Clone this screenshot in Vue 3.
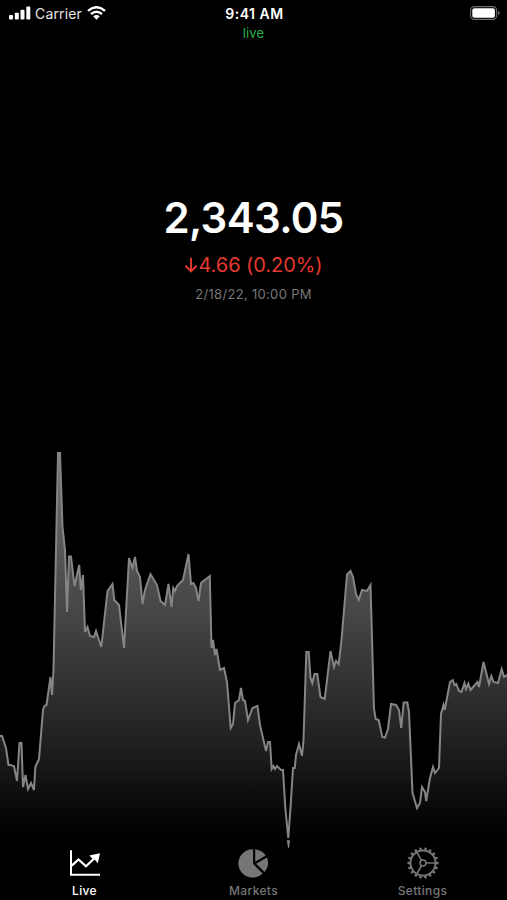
<template>
  <div class="screen">
    <header class="status">
      <div class="status__left">
        <svg class="status__signal" width="22" height="14" viewBox="0 0 22 14">
          <rect x="0" y="9" width="4" height="4.5" rx="1" />
          <rect x="5.8" y="6.7" width="4" height="6.8" rx="1" />
          <rect x="11.5" y="3.7" width="4" height="9.8" rx="1" />
          <rect x="17.3" y="0.5" width="4" height="13" rx="1" />
        </svg>
        <span class="status__carrier">Carrier</span>
        <svg class="status__wifi" width="19" height="14" viewBox="0 0 19 14">
          <path d="M1 4.8 Q9.5 -2.4 18 4.8" />
          <path d="M4 8 Q9.5 3.4 15 8" />
          <path class="status__dot" d="M6.2 10.3 Q9.5 7.6 12.8 10.3 L9.5 13.7 Z" />
        </svg>
      </div>
      <span class="status__time">9:41 AM</span>
      <div class="status__right">
        <svg width="30" height="14" viewBox="0 0 30 14">
          <rect x="0.6" y="0.6" width="26" height="12.8" rx="3.6" fill="none" stroke="#6b6b6b" stroke-width="1.1" />
          <rect x="2.3" y="2.3" width="22.6" height="9.4" rx="2" fill="#fff" />
          <path d="M28 4.7 Q29.8 5.5 29.8 7 Q29.8 8.5 28 9.3 Z" fill="#6b6b6b" />
        </svg>
      </div>
    </header>
    <div class="live">live</div>

    <section class="quote">
      <div class="quote__price">2,343.05</div>
      <div class="quote__change">
        <svg width="14" height="16" viewBox="0 0 14 16">
          <path d="M7 0.8 V14 M1.4 8.8 L7 14.3 L12.6 8.8" />
        </svg>
        <span>4.66 (0.20%)</span>
      </div>
      <div class="quote__date">2/18/22, 10:00 PM</div>
    </section>

    <svg class="chart" width="507" height="399" viewBox="0 440 507 399">
      <defs>
        <linearGradient id="fade" gradientUnits="userSpaceOnUse" x1="0" y1="452" x2="0" y2="839">
          <stop offset="0" stop-color="#757174" />
          <stop offset="0.35" stop-color="#4e4b4d" />
          <stop offset="0.55" stop-color="#383738" />
          <stop offset="0.75" stop-color="#202020" />
          <stop offset="0.92" stop-color="#090909" />
          <stop offset="1" stop-color="#000" />
        </linearGradient>
      </defs>
      <polygon :points="area" fill="url(#fade)" />
      <polyline :points="line" class="chart__line" />
      <path d="M286.7 840.3 H290 L289 848 H288.2 Z" fill="#858585" />
    </svg>

    <nav class="tabs">
      <div class="tab tab--active">
        <svg width="32" height="32" viewBox="0 0 32 32">
          <path class="stroke" d="M2 3.3 V27.7 H31" stroke-width="2" />
          <path class="stroke" d="M2.8 18.6 L9.5 12.5 L17 19.2 L27 9.8" stroke-width="2.2" />
          <path d="M20.3 8.4 L31 6.3 L28.8 16.2 L25.8 12.7 L23.5 11.8 Z" fill="currentColor" />
        </svg>
        <span>Live</span>
      </div>
      <div class="tab">
        <svg width="32" height="32" viewBox="0 0 32 32">
          <path d="M15.1 2.2 V17 L24.6 26.4 A14.2 14.2 0 1 1 15.1 2.2 Z" fill="currentColor" />
          <path d="M17.2 2.2 A14.2 14.2 0 0 1 27.7 8.5 L17.2 14.7 Z" fill="currentColor" />
          <path d="M29 10.5 A14.2 14.2 0 0 1 26.5 24.9 L18.2 16.8 Z" fill="currentColor" />
        </svg>
        <span>Markets</span>
      </div>
      <div class="tab">
        <svg width="32" height="32" viewBox="0 0 32 32">
          <circle class="stroke" cx="16" cy="16" r="12.5" stroke-width="1.9" />
          <circle class="stroke" cx="16" cy="16" r="3" stroke-width="1.6" />
          <path class="stroke" d="M19 16 H28.5 M14.5 13.4 L9.8 5.2 M14.5 18.6 L9.8 26.8" stroke-width="1.7" />
          <rect
            v-for="n in 18"
            :key="n"
            x="14.8"
            y="0.4"
            width="2.4"
            height="3"
            rx="0.6"
            fill="currentColor"
            :transform="`rotate(${n * 20 - 10} 16 16)`"
          />
        </svg>
        <span>Settings</span>
      </div>
    </nav>
  </div>
</template>

<script setup>
const prices = [
  [-2, 736], [2, 736], [6, 748], [8.5, 765], [10, 765], [14, 766], [17, 781], [19.5, 743],
  [21.5, 743], [23, 787], [25.5, 775], [28, 789], [31, 783], [34, 790], [35.3, 767], [39, 759],
  [43, 710], [44.5, 706], [46.5, 705], [50.5, 677], [52, 695], [53.5, 670], [58, 453], [60, 453],
  [62.5, 527], [65, 550], [67, 612], [69, 556.5], [71, 556.5], [74.5, 586], [79.2, 565], [80.8, 590],
  [83, 575], [85, 632], [87.5, 627], [90, 636], [94, 637], [96, 631], [101.3, 647], [107.5, 591],
  [112.5, 584], [114.3, 600], [119, 605], [124, 648], [129, 558], [132.5, 568], [135, 557],
  [137, 571], [140, 577], [142.5, 604], [145, 590], [150.5, 574], [157, 585], [160.5, 601],
  [165, 605], [168.5, 584], [171.5, 607], [173.3, 588], [175, 591], [177, 586], [183, 580],
  [188.5, 554], [191, 584], [193.5, 583], [196, 588], [198.5, 601], [201, 583], [206, 579],
  [209.8, 576], [211.5, 648], [213, 640], [215, 655], [216.5, 649], [220, 670], [224, 668],
  [227, 682], [230.7, 728], [233, 724], [235, 703], [239, 700], [241, 688], [243, 700],
  [245, 701], [248, 720], [252.5, 708], [257.5, 706], [260, 725], [266, 751], [268, 742],
  [270, 742], [271.7, 769], [273.5, 766], [275, 769], [277, 766], [281, 770], [283, 770],
  [285.3, 808], [288.3, 838], [290.5, 808], [293, 768], [294.8, 768], [296, 755], [299, 744],
  [302, 756], [303.5, 740], [306.3, 652], [308.7, 652], [310.5, 678], [312.3, 683], [314.5, 674],
  [317.3, 674], [320.5, 697], [324.7, 699], [330.5, 651], [334, 667], [336, 661], [338.7, 664],
  [341.5, 640], [347, 574.5], [350.5, 571], [353, 577], [356, 594], [358.7, 600], [362, 590],
  [367, 591], [370.5, 585], [374, 709], [375.7, 719], [378.7, 720], [382.3, 737], [385, 737.5],
  [388, 729], [391, 704], [396, 705], [399, 710], [401.2, 728], [403.7, 702.5], [407.3, 702.5],
  [409, 712], [412.5, 793], [417, 808], [420, 803], [422, 787], [425, 792], [426.2, 801],
  [430, 778], [433, 767], [435, 773], [439, 768], [441, 714], [443.5, 705], [444.7, 710],
  [450, 682], [452.7, 680], [454.5, 685], [456.3, 684], [459, 691], [461.5, 692], [464.5, 683],
  [466, 689], [468.3, 683.5], [470.5, 690], [477.5, 682], [479, 687], [483.5, 662], [489, 684],
  [491.3, 676], [493.5, 682], [498, 683], [501.7, 669], [504, 677], [509, 674]
]

const line = prices.map((p) => p.join(',')).join(' ')
const area = `-2,839 ${line} 509,839`
</script>

<style>
body {
  background: #000;
}
</style>

<style scoped>
.screen {
  display: flex;
  flex-direction: column;
  width: 507px;
  height: 900px;
  overflow: hidden;
  background: #000;
  color: #fff;
  font-family: Inter, 'Liberation Sans', sans-serif;
}

.status {
  display: grid;
  grid-template-columns: 1fr auto 1fr;
  align-items: center;
  height: 26px;
  padding: 0 7px 0 9px;
}

.status__left {
  display: flex;
  align-items: center;
}

.status__signal {
  fill: #fff;
}

.status__carrier {
  margin: 1px 5px 0 4px;
  font-size: 14px;
  letter-spacing: 0.15px;
  color: #e2e2e2;
}

.status__wifi {
  fill: none;
  stroke: #fff;
  stroke-width: 2.4;
}

.status__wifi .status__dot {
  fill: #fff;
  stroke: none;
}

.status__time {
  margin-top: 1px;
  font-size: 14px;
  font-weight: 600;
  letter-spacing: 0.5px;
}

.status__right {
  display: flex;
  justify-content: flex-end;
}

.live {
  height: 15px;
  line-height: 15px;
  text-align: center;
  font-size: 13px;
  letter-spacing: 0.2px;
  color: #2db14b;
}

.quote {
  display: flex;
  flex-direction: column;
  align-items: center;
  height: 250px;
  padding-top: 149px;
}

.quote__price {
  height: 56px;
  line-height: 55px;
  font-size: 42px;
  font-weight: 600;
  letter-spacing: -0.65px;
}

.quote__change {
  display: flex;
  align-items: center;
  height: 38px;
  font-size: 20px;
  letter-spacing: -0.05px;
  color: #e5392f;
}

.quote__change svg {
  fill: none;
  stroke: currentColor;
  stroke-width: 1.9;
}

.quote__date {
  height: 22px;
  line-height: 21px;
  font-size: 13px;
  letter-spacing: 0.32px;
  color: #777;
}

.chart {
  flex: none;
  display: block;
  overflow: visible;
}

.chart__line {
  fill: none;
  stroke: #858585;
  stroke-width: 2;
}

.tabs {
  display: flex;
  flex: 1;
  padding-top: 8px;
}

.tab {
  display: flex;
  flex: 1;
  flex-direction: column;
  align-items: center;
  color: #767676;
  font-size: 12px;
  font-weight: 500;
  letter-spacing: 0.35px;
  line-height: 15px;
}

.tab span {
  margin-top: 4px;
}

.tab--active {
  color: #fff;
}

.stroke {
  fill: none;
  stroke: currentColor;
}
</style>
